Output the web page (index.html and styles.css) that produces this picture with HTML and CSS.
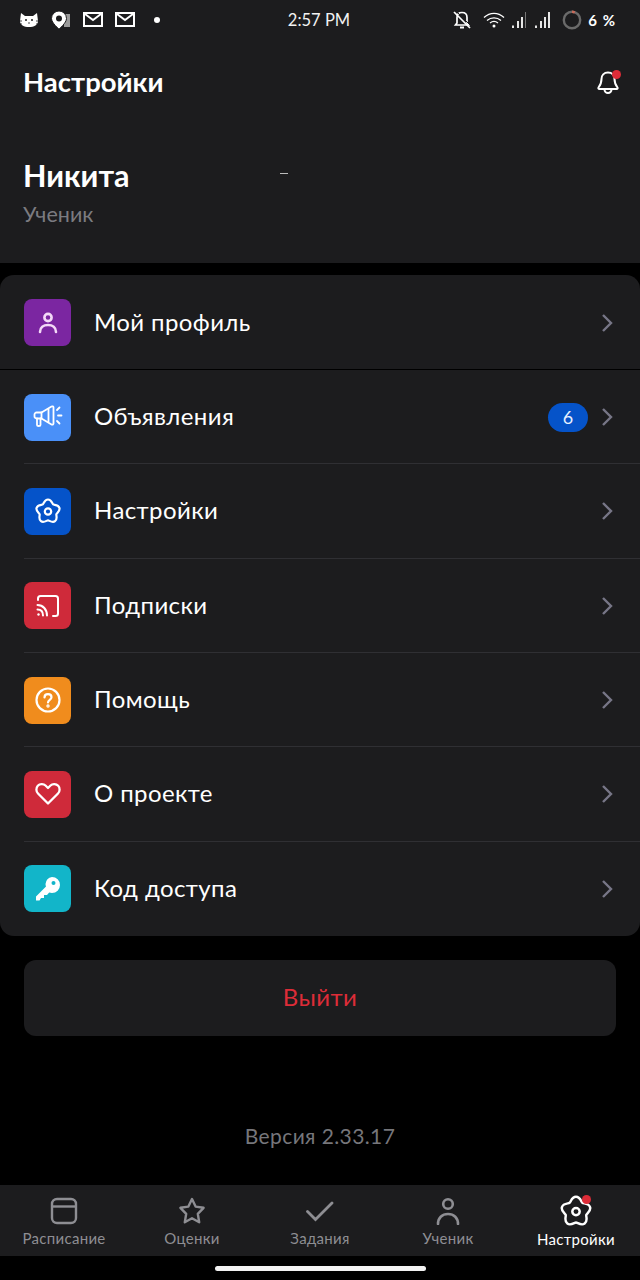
FILE: index.html
```html
<!DOCTYPE html>
<html lang="ru">
<head>
<meta charset="utf-8">
<title>Настройки</title>
<link rel="stylesheet" href="styles.css">
</head>
<body>
<div class="screen">
  <header class="top">
    <div class="status">
      <div class="status-side">
        <svg class="si" width="20" height="16" viewBox="0 0 20 16"><path fill="#fff" d="M2 1l4 3h8l4-3 1 8c0 4-4 6-9 6S1 13 1 9z"/><circle cx="7" cy="8" r="1" fill="#1c1c1e"/><circle cx="13" cy="8" r="1" fill="#1c1c1e"/><path d="M10 10v2M0 9h3M17 9h3M0 12h3M17 12h3" stroke="#1c1c1e" stroke-width=".8"/></svg>
        <svg class="si pin" width="20" height="18" viewBox="0 0 20 18"><path fill="#9a9a9a" d="M13 3h6v13h-6z"/><path fill="#fff" stroke="#1c1c1e" d="M8 0a7.5 7.5 0 0 1 7.5 7.5C15.500 12 8 18 8 18S.5 12 .5 7.500A7.500 7.500 0 0 1 8 0z"/><circle cx="8" cy="7.500" r="3" fill="#1c1c1e"/></svg>
        <svg class="si mail" width="20" height="16" viewBox="0 0 20 16"><path fill="none" stroke="#fff" stroke-width="2" d="M1 1h18v13H1z"/><path fill="none" stroke="#fff" stroke-width="2" d="M2 2l8 6 8-6"/></svg>
        <svg class="si mail" width="20" height="16" viewBox="0 0 20 16"><path fill="none" stroke="#fff" stroke-width="2" d="M1 1h18v13H1z"/><path fill="none" stroke="#fff" stroke-width="2" d="M2 2l8 6 8-6"/></svg>
        <span class="dot"></span>
      </div>
      <div class="clock">2:57 PM</div>
      <div class="status-side right">
        <svg class="bell-off" width="18" height="20" viewBox="0 0 18 20"><path fill="none" stroke="#fff" stroke-width="1.700" d="M4 7.500C4 4 6 2.500 9 2.500s5 1.500 5 5V13l1.500 2h-13L4 13z"/><path d="M7 17.500h4" stroke="#fff" stroke-width="2"/><path d="M1 2l16 16" stroke="#fff" stroke-width="1.700"/><path d="M3 1l15 15" stroke="#1c1c1e" stroke-width="1"/></svg>
        <svg class="wifi" width="22" height="16" viewBox="0 0 22 16"><g fill="none" stroke="#fff" stroke-width="1.300"><path d="M1 5.500c6-5.500 14-5.500 20 0"/><path d="M4 8.500c4-3.500 10-3.500 14 0"/><path d="M7 11c2.500-2 5.500-2 8 0"/></g><circle cx="11" cy="14" r="1.500" fill="#fff"/></svg>
        <svg class="signal" width="16" height="18" viewBox="0 0 16 18"><path fill="#e6e6e6" d="M1 14.500h2V17H1zM6 10h2v7H6z"/><path fill="#e6e6e6" d="M10 6h2v11h-2z"/><path fill="#777" d="M14 1h1v16h-1z"/></svg>
        <svg class="signal two" width="16" height="18" viewBox="0 0 16 18"><path fill="#e6e6e6" d="M1 14.500h2V17H1zM6 10h2v7H6zM10 6h2v11h-2zM14 1h2v16h-2z"/></svg>
        <svg class="ring" width="20" height="20" viewBox="0 0 20 20"><circle cx="10" cy="10" r="8.200" fill="none" stroke="#6a6a6a" stroke-width="2.400"/><path d="M10 1.800a8.200 8.200 0 0 1 2.800.5" fill="none" stroke="#c96a5a" stroke-width="2.400"/></svg>
        <span class="pct">6 %</span>
      </div>
    </div>
    <div class="title-row">
      <h1 class="title">Настройки</h1>
      <span class="bell-wrap">
        <svg width="24" height="26" viewBox="0 0 24 26"><path fill="none" stroke="#fff" stroke-width="2" stroke-linejoin="round" d="M12 3.500c-4 0-6.500 2.800-6.500 6.500 0 4-1 6-3 8.500-.4.600 0 1.500.8 1.500h17.400c.8 0 1.200-.9.800-1.500-2-2.500-3-4.500-3-8.500 0-3.700-2.500-6.500-6.500-6.500z"/><path fill="none" stroke="#fff" stroke-width="2" d="M8.500 20.500a3.500 3.500 0 0 0 7 0"/></svg>
        <span class="red-dot bell-dot"></span>
      </span>
    </div>
    <div class="user">
      <div class="user-name">Никита</div>
      <div class="user-role">Ученик</div>
      <span class="tick"></span>
    </div>
  </header>

  <main class="menu">
    <a class="row first">
      <span class="tile purple"><svg width="24" height="24" viewBox="0 0 24 24" fill="none" stroke="#f3d9f7" stroke-width="2.600" stroke-linecap="round"><circle cx="12" cy="6.500" r="3.600"/><path d="M4 21c0-4.500 3.500-7 8-7s8 2.500 8 7"/></svg></span>
      <span class="label">Мой профиль</span>
      <svg class="chev" width="12" height="20" viewBox="0 0 12 20"><path d="M2 2l8 8-8 8" fill="none" stroke="#777687" stroke-width="2.400"/></svg>
    </a>
    <a class="row">
      <span class="tile sky"><svg width="30" height="26" viewBox="0 0 30 26" fill="none" stroke="#fff" stroke-width="1.800" stroke-linejoin="round" stroke-linecap="round"><path d="M1.500 10.500c0-1.200 1-2 2-2h5L18.500 2.500c.8-.5 2 0 2 1v16c0 1-1.200 1.500-2 1l-10-6h-5c-1 0-2-.8-2-2z"/><path d="M8.500 8.500v6M4 14.500v6.500c0 1.500 3.500 1.500 3.500 0v-6.500"/><path d="M15.500 5.500v12"/><path d="M24 6l2.500-2.500M25 11.500h3.500M24 17l2.500 2.500"/></svg></span>
      <span class="label">Объявления</span>
      <span class="badge">6</span>
      <svg class="chev" width="12" height="20" viewBox="0 0 12 20"><path d="M2 2l8 8-8 8" fill="none" stroke="#777687" stroke-width="2.400"/></svg>
    </a>
    <a class="row">
      <span class="tile blue"><svg width="26" height="26" viewBox="0 0 26 26" fill="none" stroke="#fff" stroke-width="2.200" stroke-linejoin="round"><path d="M13 1.500C16.500 1.500 17.200 5.670 18.170 6.380C19.140 7.090 23.330 6.460 24.410 9.790C25.490 13.120 21.740 15.080 21.370 16.220C21 17.360 22.880 21.150 20.050 23.210C17.220 25.270 14.200 22.300 13 22.300C11.800 22.300 8.780 25.270 5.950 23.210C3.120 21.150 5 17.360 4.630 16.220C4.260 15.080 .51 13.120 1.590 9.790C2.670 6.460 6.860 7.090 7.830 6.380C8.800 5.670 9.500 1.500 13 1.500z"/><circle cx="13" cy="13.500" r="3.200"/></svg></span>
      <span class="label">Настройки</span>
      <svg class="chev" width="12" height="20" viewBox="0 0 12 20"><path d="M2 2l8 8-8 8" fill="none" stroke="#777687" stroke-width="2.400"/></svg>
    </a>
    <a class="row">
      <span class="tile red"><svg width="24" height="24" viewBox="0 0 24 24" fill="none" stroke="#fff" stroke-width="2" stroke-linecap="round"><path d="M2 6V4.500C2 3 3 2 4.500 2h15C21 2 22 3 22 4.500v15c0 1.500-1 2.500-2.500 2.500H17"/><path d="M1.500 11c5.500 0 9.500 4.500 9.500 10.500"/><path d="M1.500 15.500c3.500 0 5.500 2.500 5.500 6"/><circle cx="2.500" cy="20.500" r="1.200" fill="#fff" stroke="none"/></svg></span>
      <span class="label">Подписки</span>
      <svg class="chev" width="12" height="20" viewBox="0 0 12 20"><path d="M2 2l8 8-8 8" fill="none" stroke="#777687" stroke-width="2.400"/></svg>
    </a>
    <a class="row">
      <span class="tile orange"><svg width="26" height="26" viewBox="0 0 26 26" fill="none" stroke="#fff" stroke-width="2.200" stroke-linecap="round"><circle cx="13" cy="13" r="11.500"/><path d="M9.500 10.500c0-2 1.500-3.300 3.500-3.300s3.500 1.300 3.500 3c0 2.800-3.500 2.500-3.500 5.300"/><circle cx="13" cy="19" r=".6" fill="#fff"/></svg></span>
      <span class="label">Помощь</span>
      <svg class="chev" width="12" height="20" viewBox="0 0 12 20"><path d="M2 2l8 8-8 8" fill="none" stroke="#777687" stroke-width="2.400"/></svg>
    </a>
    <a class="row">
      <span class="tile red"><svg width="26" height="24" viewBox="0 0 26 24" fill="none" stroke="#fff" stroke-width="2.300" stroke-linejoin="round"><path d="M13 21.500L3 11.500C1 9.500.8 6 2.800 3.800S8.500 1.500 10.500 3.500L13 6l2.500-2.500c2-2 5.700-1.800 7.700.3s1.800 5.700-.2 7.700z"/></svg></span>
      <span class="label">О проекте</span>
      <svg class="chev" width="12" height="20" viewBox="0 0 12 20"><path d="M2 2l8 8-8 8" fill="none" stroke="#777687" stroke-width="2.400"/></svg>
    </a>
    <a class="row">
      <span class="tile teal"><svg width="26" height="26" viewBox="0 0 26 26"><path fill="#fff" d="M17 1a8 8 0 0 1 0 16c-1 0-2-.2-2.800-.5L12 19H9v3H6l-1.500 2.500H1v-4l10-10c-.3-1-.5-1.500-.5-2.500A8 8 0 0 1 17 1z"/><circle cx="18.500" cy="7" r="2" fill="#12b5c9"/></svg></span>
      <span class="label">Код доступа</span>
      <svg class="chev" width="12" height="20" viewBox="0 0 12 20"><path d="M2 2l8 8-8 8" fill="none" stroke="#777687" stroke-width="2.400"/></svg>
    </a>
  </main>

  <button class="logout"><span class="logout-text">Выйти</span></button>
  <div class="version">Версия 2.33.17</div>

  <nav class="tabs">
    <div class="tab">
      <svg width="28" height="28" viewBox="0 0 28 28" fill="none" stroke="#8e8e93" stroke-width="2.400"><rect x="2" y="2" width="24" height="24" rx="5"/><path d="M2 9.500h24"/></svg>
      <span>Расписание</span>
    </div>
    <div class="tab">
      <svg width="28" height="28" viewBox="0 0 28 28" fill="none" stroke="#8e8e93" stroke-width="2.400" stroke-linejoin="round"><path d="M14 2l3.600 7.600 8 1.200-5.800 6 1.400 8.500-7.200-4-7.200 4 1.400-8.500-5.800-6 8-1.200z"/></svg>
      <span>Оценки</span>
    </div>
    <div class="tab">
      <svg width="28" height="28" viewBox="0 0 28 28" fill="none" stroke="#8e8e93" stroke-width="2.800" stroke-linecap="round"><path d="M1.500 14.500l8 8L26 6"/></svg>
      <span>Задания</span>
    </div>
    <div class="tab">
      <svg width="28" height="28" viewBox="0 0 28 28" fill="none" stroke="#8e8e93" stroke-width="2.600" stroke-linecap="round"><circle cx="14" cy="7" r="4.800"/><path d="M4 27c0-6 4-10 10-10s10 4 10 10"/></svg>
      <span>Ученик</span>
    </div>
    <div class="tab active">
      <span class="gear-wrap">
        <svg width="32" height="32" viewBox="0 0 26 26" fill="none" stroke="#fff" stroke-width="2" stroke-linejoin="round"><path d="M13 1.500C16.500 1.500 17.200 5.670 18.170 6.380C19.140 7.090 23.330 6.460 24.410 9.790C25.490 13.120 21.740 15.080 21.370 16.220C21 17.360 22.880 21.150 20.050 23.210C17.220 25.270 14.200 22.300 13 22.300C11.800 22.300 8.780 25.270 5.950 23.210C3.120 21.150 5 17.360 4.630 16.220C4.260 15.080 .51 13.120 1.590 9.790C2.670 6.460 6.860 7.090 7.830 6.380C8.800 5.670 9.500 1.500 13 1.500z"/><circle cx="13" cy="13.500" r="3"/></svg>
        <span class="red-dot gear-dot"></span>
      </span>
      <span class="tab-label">Настройки</span>
    </div>
  </nav>
  <div class="home"><span class="home-bar"></span></div>
</div>
</body>
</html>
```

FILE: styles.css
```css
* { box-sizing: border-box; }
html, body { margin: 0; background: #000; }
body { font-family: Lato, "Open Sans", "Noto Sans", sans-serif; color: #fff; }
.screen { width: 640px; height: 1280px; display: flex; flex-direction: column; overflow: hidden; background: #000; }

.top { height: 263px; background: #1c1c1e; flex: none; display: flex; flex-direction: column; }
.status { height: 40px; display: flex; align-items: center; justify-content: space-between; padding: 0 24px 0 19px; }
.status-side { display: flex; align-items: center; gap: 10px; width: 220px; }
.status-side.right { justify-content: flex-end; gap: 0; }
.si.pin { margin-left: 2px; margin-right: 2px; }
.si.mail + .si.mail { margin-left: 2px; }
.dot { width: 6px; height: 6px; border-radius: 50%; background: #fff; margin-left: 9px; }
.clock { font-size: 16.500px; color: #f2f2f2; font-family: Lato, sans-serif; margin-left: 3px; }
.bell-off { margin-right: 12px; }
.wifi { margin-right: 6px; }
.signal { margin-right: 7px; }
.signal.two { margin-right: 12px; }
.ring { margin-right: 6px; }
.pct { font-size: 15px; font-weight: 700; letter-spacing: 1px; }

.title-row { height: 84px; display: flex; align-items: center; justify-content: space-between; padding: 0 20px 0 23px; }
.title { margin: 0; font-size: 27.500px; font-weight: 700; line-height: 1; }
.bell-wrap { position: relative; display: block; width: 24px; height: 26px; }
.red-dot { position: absolute; width: 9px; height: 9px; border-radius: 50%; background: #dd2c38; }
.bell-dot { top: 1px; right: -1px; }

.user { padding: 33px 23px 0; position: relative; }
.user-name { font-size: 30.500px; font-weight: 700; line-height: 36px; }
.user-role { font-size: 21.500px; line-height: 26px; margin-top: 8px; color: #7b7b80; }
.tick { position: absolute; left: 280px; top: 49px; width: 8px; height: 1px; background: #bbb; }

.menu { margin-top: 12px; height: 661px; background: #1c1c1e; border-radius: 14px; display: flex; flex-direction: column; flex: none; overflow: hidden; }
.row { flex: 1 1 0; display: flex; align-items: center; padding: 0 24px; position: relative; }
.row.first { flex: none; height: 95px; }
.row + .row::before { content: ""; position: absolute; left: 24px; right: 0; top: -1px; height: 1px; background: #2f2f33; }
.row.first + .row::before { left: 0; background: #000; }
.tile { width: 47px; height: 47px; border-radius: 8px; display: flex; align-items: center; justify-content: center; flex: none; }
.purple { background: #7b26a1; }
.sky { background: #4a90f8; }
.blue { background: #0553c9; }
.red { background: #cf2a3a; }
.orange { background: #f08c1d; }
.teal { background: #12b5c9; }
.label { margin: 0 0 3px 23px; font-size: 24px; letter-spacing: .4px; flex: 1; }
.badge { width: 40px; height: 29px; border-radius: 15px; background: #0553c9; display: flex; align-items: center; justify-content: center; font-size: 18px; margin-right: 13px; color: #e6f0ff; }
.chev { flex: none; margin-right: 3px; }

.logout { margin: 24px 24px 0; height: 76px; flex: none; border: 0; border-radius: 12px; background: #1c1c1e; color: #dd2c38; font: 400 24px Lato, "Open Sans", sans-serif; letter-spacing: .4px; padding: 0 0 3px; }
.version { margin-top: 87px; height: 26px; line-height: 26px; text-align: center; font-size: 21px; color: #76767b; letter-spacing: .4px; }

.tabs { margin-top: 36px; height: 71px; flex: none; background: #1c1c1e; display: flex; }
.tab { flex: 1; display: flex; flex-direction: column; align-items: center; padding-top: 12px; color: #8e8e93; font-size: 15px; letter-spacing: .3px; }
.tab > span:last-child { line-height: 18px; margin-top: 4px; white-space: nowrap; }
.tab.active { color: #fff; padding-top: 10px; }
.tab.active .tab-label { margin-top: 3px; }
.gear-wrap { position: relative; display: block; width: 32px; height: 32px; }
.gear-dot { top: 0; right: 1px; }
.home { flex: 1; display: flex; justify-content: center; align-items: center; }
.home-bar { width: 211px; height: 5px; border-radius: 3px; background: #f2f2f2; }
```
